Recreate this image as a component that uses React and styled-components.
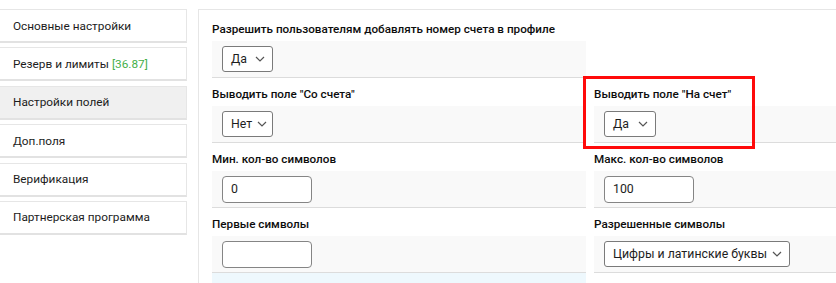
import React from "react";
import styled, { createGlobalStyle } from "styled-components";

const Global = createGlobalStyle`
  html, body { margin: 0; padding: 0; background: #fff; }
  body { font-family: Roboto, "Noto Sans", Arial, sans-serif; }
  * { box-sizing: border-box; }
`;

const Page = styled.div`
  display: flex;
  align-items: flex-start;
  width: 836px;
  height: 283px;
  padding-top: 9px;
  overflow: hidden;
`;

const Sidebar = styled.nav`
  width: 187px;
  flex-shrink: 0;
  margin-right: 11px;
  display: flex;
  flex-direction: column;
  gap: 4.4px;
`;

const SideItem = styled.div`
  height: 34px;
  display: flex;
  align-items: center;
  padding-left: 13px;
  border: 1px solid #e6e6e6;
  border-left: none;
  border-bottom: 2px solid #e2e2e2;
  background: ${(p) => (p.$active ? "#f0f0f0" : "#fff")};
  font-size: 11.8px;
  color: #1c1c1c;
  white-space: nowrap;
`;

const Count = styled.span`
  color: #45b04a;
  margin-left: 3px;
`;

const Panel = styled.section`
  flex: 1;
  min-width: 0;
  height: 274px;
  border-top: 1px solid #e6e6e6;
  border-left: 1px solid #e6e6e6;
  padding: 3px 0 0 13px;
  overflow: hidden;
`;

const Grid = styled.div`
  display: grid;
  grid-template-columns: 374px 374px;
  column-gap: 8px;
`;

const Cell = styled.div`
  position: relative;
  border-bottom: ${(p) => (p.$empty ? "none" : "1px solid #dcdcdc")};
`;

const Label = styled.div`
  padding: 7px 0 3px;
  line-height: 18px;
  font-size: 11.7px;
  font-weight: 500;
  color: #0d0d0d;
  white-space: nowrap;
`;

const Field = styled.div`
  height: 36px;
  background: #f9f9f9;
  display: flex;
  align-items: center;
  padding-left: 10px;
`;

const SelectBox = styled.div`
  height: 26px;
  width: ${(p) => p.$width || "auto"};
  display: inline-flex;
  align-items: center;
  justify-content: space-between;
  gap: 5px;
  padding: 0 7px 0 8px;
  border: 1px solid #7a7a7a;
  border-radius: 3px;
  background: #fff;
  font-size: 12.3px;
  color: #1e1e1e;
  white-space: nowrap;

  svg {
    flex-shrink: 0;
  }
`;

const TextInput = styled.input`
  width: 90px;
  height: 27px;
  border: 1px solid #858585;
  border-radius: 4px;
  padding: 0 8px;
  font-family: Roboto, "Noto Sans", Arial, sans-serif;
  font-size: 12.3px;
  color: #1e1e1e;
  background: #fff;
  outline: none;
`;

const Highlight = styled.div`
  position: absolute;
  left: -11px;
  top: -2px;
  width: 172px;
  height: 73px;
  border: 3px solid #ff0a0a;
  pointer-events: none;
`;

const NoticeRow = styled.div`
  height: 12px;
  background: #eef8fd;
`;

const Chevron = () => (
  <svg width="10" height="6" viewBox="0 0 10 6" fill="none">
    <polyline points="1,1 5,5 9,1" stroke="#555" strokeWidth="1.2" />
  </svg>
);

const Select = ({ value, width }) => (
  <SelectBox $width={width}>
    <span>{value}</span>
    <Chevron />
  </SelectBox>
);

const menu = [
  { title: "Основные настройки" },
  { title: "Резерв и лимиты", count: "[36.87]" },
  { title: "Настройки полей", active: true },
  { title: "Доп.поля" },
  { title: "Верификация" },
  { title: "Партнерская программа" },
];

export default function App() {
  return (
    <>
      <Global />
      <Page>
        <Sidebar>
          {menu.map((m) => (
            <SideItem key={m.title} $active={m.active}>
              {m.title}
              {m.count && <Count>{m.count}</Count>}
            </SideItem>
          ))}
        </Sidebar>
        <Panel>
          <Grid>
            <Cell>
              <Label>Разрешить пользователям добавлять номер счета в профиле</Label>
              <Field>
                <Select value="Да" width="51px" />
              </Field>
            </Cell>
            <Cell $empty />

            <Cell>
              <Label>Выводить поле "Со счета"</Label>
              <Field>
                <Select value="Нет" width="51px" />
              </Field>
            </Cell>
            <Cell>
              <Label>Выводить поле "На счет"</Label>
              <Field>
                <Select value="Да" width="52px" />
              </Field>
              <Highlight />
            </Cell>

            <Cell>
              <Label>Мин. кол-во символов</Label>
              <Field>
                <TextInput defaultValue="0" />
              </Field>
            </Cell>
            <Cell>
              <Label>Макс. кол-во символов</Label>
              <Field>
                <TextInput defaultValue="100" />
              </Field>
            </Cell>

            <Cell>
              <Label>Первые символы</Label>
              <Field>
                <TextInput defaultValue="" />
              </Field>
            </Cell>
            <Cell>
              <Label>Разрешенные символы</Label>
              <Field>
                <Select value="Цифры и латинские буквы" />
              </Field>
            </Cell>

            <NoticeRow />
          </Grid>
        </Panel>
      </Page>
    </>
  );
}
